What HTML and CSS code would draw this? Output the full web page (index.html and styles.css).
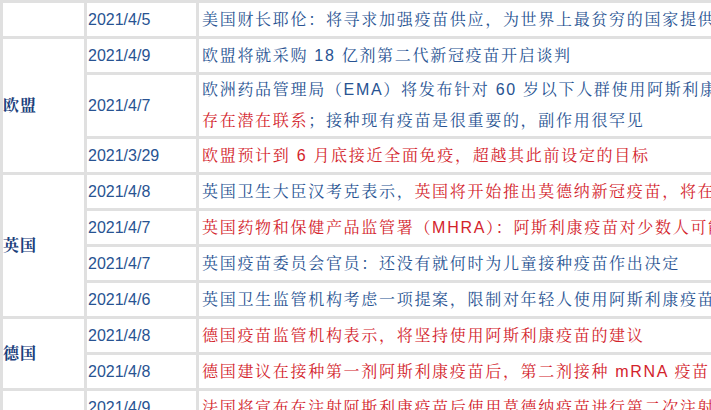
FILE: index.html
```html
<!DOCTYPE html>
<html lang="zh-CN">
<head>
<meta charset="utf-8">
<title>疫苗动态</title>
<link rel="stylesheet" href="styles.css">
</head>
<body>
<div class="sheet">
<table class="news">
<colgroup><col class="c-region"><col class="c-date"><col class="c-text"></colgroup>
<tbody>
<tr><td class="region"></td><td class="date">2021/4/5</td><td class="text blue">美国财长耶伦：将寻求加强疫苗供应，为世界上最贫穷的国家提供资金与技术支持</td></tr>
<tr><td class="region" rowspan="3">欧盟</td><td class="date">2021/4/9</td><td class="text blue">欧盟将就采购 18 亿剂第二代新冠疫苗开启谈判</td></tr>
<tr><td class="date">2021/4/7</td><td class="text two blue">欧洲药品管理局（EMA）将发布针对 60 岁以下人群使用阿斯利康疫苗的建议，认为疫苗与罕见血栓之间<br><span class="red">存在潜在联系</span>；接种现有疫苗是很重要的，副作用很罕见</td></tr>
<tr><td class="date">2021/3/29</td><td class="text red">欧盟预计到 6 月底接近全面免疫，超越其此前设定的目标</td></tr>
<tr><td class="region" rowspan="4">英国</td><td class="date">2021/4/8</td><td class="text blue">英国卫生大臣汉考克表示，<span class="red">英国将开始推出莫德纳新冠疫苗，将在威尔士首先接种</span></td></tr>
<tr><td class="date">2021/4/7</td><td class="text red">英国药物和保健产品监管署（MHRA）：阿斯利康疫苗对少数人可能引发血栓</td></tr>
<tr><td class="date">2021/4/7</td><td class="text blue">英国疫苗委员会官员：还没有就何时为儿童接种疫苗作出决定</td></tr>
<tr><td class="date">2021/4/6</td><td class="text blue">英国卫生监管机构考虑一项提案，限制对年轻人使用阿斯利康疫苗</td></tr>
<tr><td class="region" rowspan="2">德国</td><td class="date">2021/4/8</td><td class="text red">德国疫苗监管机构表示，将坚持使用阿斯利康疫苗的建议</td></tr>
<tr><td class="date">2021/4/8</td><td class="text red">德国建议在接种第一剂阿斯利康疫苗后，第二剂接种 mRNA 疫苗</td></tr>
<tr><td class="region" rowspan="2">法国</td><td class="date">2021/4/9</td><td class="text red">法国将宣布在注射阿斯利康疫苗后使用莫德纳疫苗进行第二次注射</td></tr>
<tr><td class="date">2021/4/8</td><td class="text blue">法国将扩大疫苗接种范围</td></tr>
</tbody>
</table>
</div>
</body>
</html>
```

FILE: styles.css
```css
html, body {
  margin: 0;
  padding: 0;
  background: #ffffff;
}
body {
  overflow: hidden;
}
.sheet {
  width: 711px;
  height: 410px;
  overflow: hidden;
}
.news {
  border-collapse: collapse;
  table-layout: fixed;
  width: 1100px;
  font-family: "Liberation Sans", "Noto Serif CJK SC", "Noto Sans CJK SC", sans-serif;
  font-size: 16px;
}
.c-region { width: 84px; }
.c-date { width: 112px; }
.c-text { width: 904px; }
.news td {
  border: 3px solid #e0e0e0;
  padding: 0;
  line-height: 33px;
  vertical-align: middle;
  white-space: nowrap;
  overflow: hidden;
}
.region {
  color: #1c3f7c;
  font-weight: bold;
  letter-spacing: 1px;
  padding-left: 0;
}
.date {
  color: #285392;
  padding-left: 1px !important;
}
.text {
  padding-left: 3px !important;
  letter-spacing: 1.7px;
}
.text.two {
  line-height: 30.5px;
}
.blue { color: #285392; }
.red { color: #d3232b; }
```
